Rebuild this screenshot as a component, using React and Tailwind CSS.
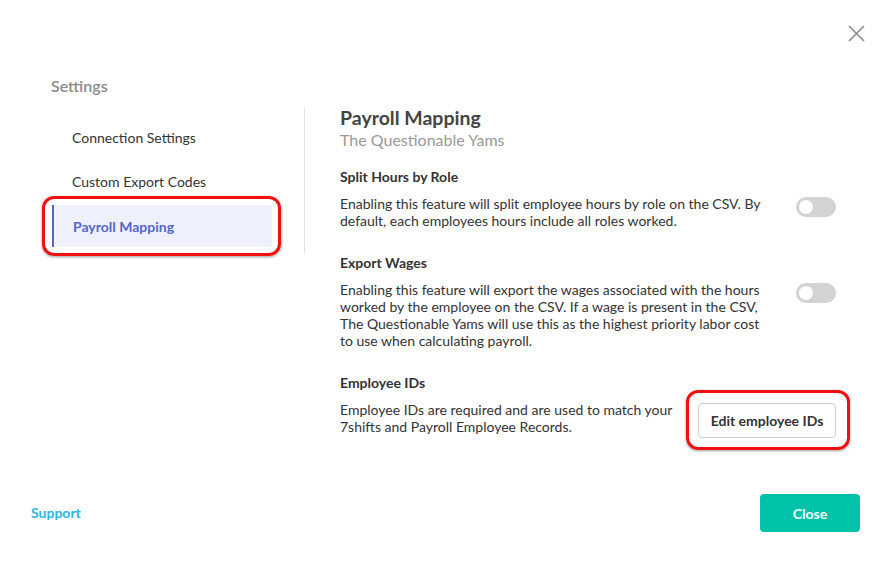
const font = { fontFamily: "Lato, 'Open Sans', sans-serif" };

function Toggle() {
  return (
    <div className="w-[40px] h-[20px] rounded-full bg-[#d3d3d3] flex items-center px-[3px] shrink-0">
      <div className="w-[14px] h-[14px] rounded-full bg-white" />
    </div>
  );
}

function NavItem({ label, active }) {
  if (active) {
    return (
      <div className="relative mt-[2px]">
        <div className="h-[42px] bg-[#eef1fb] border-l-2 border-[#5566c8] flex items-center pl-[19px] text-[14px] font-bold text-[#5566c8] w-[220px] rounded-r-[3px]">
          {label}
        </div>
        {/* annotation */}
        <div className="absolute -left-[10px] -top-[9px] w-[239px] h-[60px] rounded-[12px] border-[3px] border-[#f01010] shadow-[0_1px_3px_rgba(0,0,0,0.4)] pointer-events-none" />
      </div>
    );
  }
  return (
    <div className="h-[44px] flex items-center pl-[20px] text-[14px] text-[#333]">{label}</div>
  );
}

export default function App() {
  return (
    <div style={font} className="w-[887px] h-[566px] bg-white relative flex flex-col">
      {/* close X */}
      <button className="absolute right-[22px] top-[25px] w-[17px] h-[17px]">
        <svg viewBox="0 0 17 17" className="w-[17px] h-[17px]" stroke="#8a8a8a" strokeWidth="1.6" fill="none">
          <path d="M1 1L16 16M16 1L1 16" />
        </svg>
      </button>

      <div className="flex pt-[77px] flex-1">
        {/* sidebar */}
        <div className="w-[253px] pl-[52px] shrink-0">
          <div className="text-[16px] text-[#8a8a8a] font-semibold -ml-[1px] h-[38px] leading-[18px]">Settings</div>
          <div className="flex flex-col">
            <NavItem label="Connection Settings" />
            <NavItem label="Custom Export Codes" />
            <NavItem label="Payroll Mapping" active />
          </div>
        </div>

        <div className="w-px bg-[#e4e4e4] mt-[30px] h-[147px] ml-[51px]" />

        {/* content */}
        <div className="pl-[35px] pr-[51px] flex-1 pt-[30px]">
          <div className="text-[19.5px] font-bold text-[#444] leading-[22px]">Payroll Mapping</div>
          <div className="text-[16px] text-[#999] leading-[20px] mt-[1px]">The Questionable Yams</div>

          <div className="mt-[18px]">
            <div className="text-[14px] font-bold text-[#333] leading-[18px]">Split Hours by Role</div>
            <div className="flex justify-between items-start mt-[9px]">
              <p className="text-[14px] text-[#333] leading-[17px] w-[432px]">
                Enabling this feature will split employee hours by role on the CSV. By default, each employees hours include all roles worked.
              </p>
              <div className="mt-[2px]"><Toggle /></div>
            </div>
          </div>

          <div className="mt-[25px]">
            <div className="text-[14px] font-bold text-[#333] leading-[18px]">Export Wages</div>
            <div className="flex justify-between items-start mt-[9px]">
              <p className="text-[14px] text-[#333] leading-[17px] w-[432px]">
                Enabling this feature will export the wages associated with the hours worked by the employee on the CSV. If a wage is present in the CSV, The Questionable Yams will use this as the highest priority labor cost to use when calculating payroll.
              </p>
              <div className="mt-[2px]"><Toggle /></div>
            </div>
          </div>

          <div className="mt-[25px]">
            <div className="text-[14px] font-bold text-[#333] leading-[18px]">Employee IDs</div>
            <div className="flex justify-between items-start mt-[9px]">
              <p className="text-[14px] text-[#333] leading-[17px] w-[345px]">
                Employee IDs are required and are used to match your 7shifts and Payroll Employee Records.
              </p>
              <div className="relative mt-[2px]">
                <button className="h-[35px] w-[138px] border border-[#cfcfcf] rounded-[4px] text-[14px] font-bold text-[#333] bg-white">
                  Edit employee IDs
                </button>
                <div className="absolute -left-[12px] -top-[13px] -right-[14px] -bottom-[12px] rounded-[12px] border-[3px] border-[#f01010] shadow-[0_1px_3px_rgba(0,0,0,0.4)] pointer-events-none" />
              </div>
            </div>
          </div>
        </div>
      </div>

      {/* footer */}
      <div className="flex items-center justify-between pl-[31px] pr-[27px] pb-[34px]">
        <a className="text-[14px] font-bold text-[#2bb6df] -mt-[1px]">Support</a>
        <button className="w-[100px] h-[38px] rounded-[4px] bg-[#00c3a9] text-white text-[14px] font-bold">Close</button>
      </div>
    </div>
  );
}
